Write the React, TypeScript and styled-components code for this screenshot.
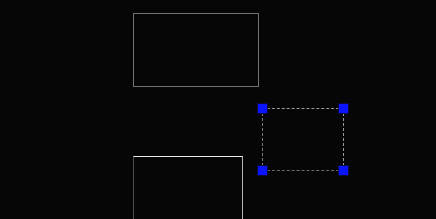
import styled, { createGlobalStyle } from "styled-components";

const GlobalStyle = createGlobalStyle`
	html, body {
		margin: 0;
		padding: 0;
		background: #060606;
		overflow: hidden;
	}
`;

type Box = { x: number; y: number; w: number; h: number };

const shapes: (Box & { tone: "dim" | "bright" })[] = [
	{ x: 133, y: 13, w: 126, h: 74, tone: "dim" },
	{ x: 133, y: 156, w: 110, h: 80, tone: "bright" },
];

const selection: Box = { x: 262, y: 108, w: 82, h: 63 };

export default function App() {
	return (
		<>
			<GlobalStyle />
			<Canvas>
				{shapes.map((s, i) => (
					<Shape
						key={i}
						$tone={s.tone}
						style={{ left: s.x, top: s.y, width: s.w, height: s.h }}
					/>
				))}
				<Selection
					style={{
						left: selection.x,
						top: selection.y,
						width: selection.w,
						height: selection.h,
					}}
				>
					<Handle $v="top" $h="left" />
					<Handle $v="top" $h="right" />
					<Handle $v="bottom" $h="left" />
					<Handle $v="bottom" $h="right" />
				</Selection>
			</Canvas>
		</>
	);
}

const Canvas = styled.div`
	position: relative;
	width: 436px;
	height: 219px;
	background: #060606;
	overflow: hidden;
`;

const Shape = styled.div<{ $tone: "dim" | "bright" }>`
	position: absolute;
	box-sizing: border-box;
	border: 1px solid #727272;
	${({ $tone }) =>
		$tone === "bright" &&
		`
		border-top-color: #ececec;
		border-left-color: #4a4a4a;
		border-right-color: #b4b4b4;
		border-bottom-color: #b4b4b4;
	`}
`;

const Selection = styled.div`
	position: absolute;
	box-sizing: border-box;
	border: 1px dashed #9a9a9a;
	border-bottom-color: #6a6a6a;
	border-left-color: #7a7a7a;
`;

const Handle = styled.span<{ $v: "top" | "bottom"; $h: "left" | "right" }>`
	position: absolute;
	width: 9px;
	height: 9px;
	background: #0a14ff;
	border: 1px solid #0a0a40;
	${({ $v }) => ($v === "top" ? "top: -6px;" : "bottom: -6px;")}
	${({ $h }) => ($h === "left" ? "left: -6px;" : "right: -6px;")}
`;
